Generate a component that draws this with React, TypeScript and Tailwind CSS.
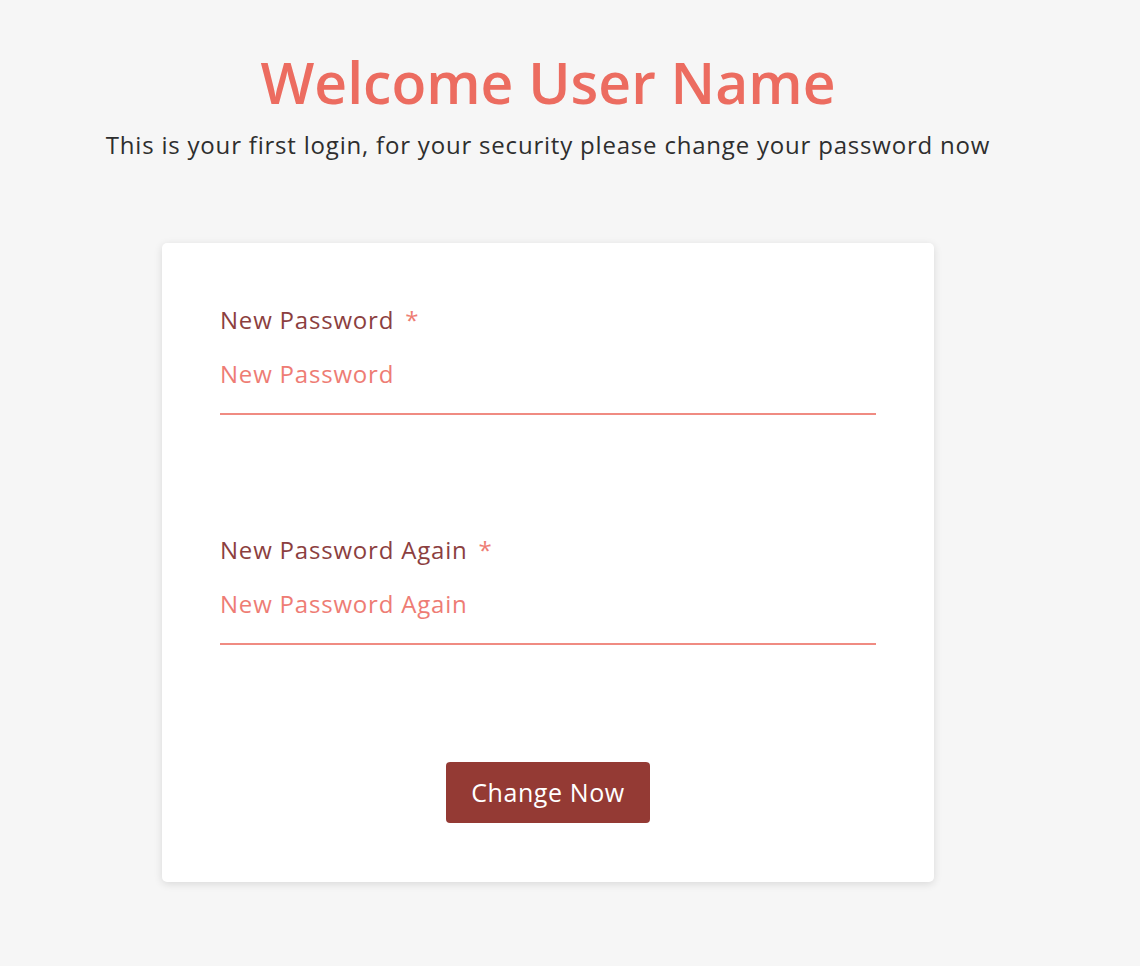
export default function App() {
  return (
    <div className="min-h-[966px] bg-[#f6f6f6] font-['Open_Sans','Noto_Sans',sans-serif]">
      <div className="w-[1096px]">
        <div className="flex flex-col items-center pt-[48px]">
          <h1 className="text-[57px] font-semibold leading-[68px] text-[#ec6c60]">Welcome User Name</h1>
          <p className="mt-[13px] text-[24px] leading-[32px] tracking-[0.8px] text-[#2e2e2e]">
            This is your first login, for your security please change your password now
          </p>
        </div>

        <div className="mx-auto mt-[82px] w-[772px] rounded-[5px] bg-white px-[58px] pb-[59px] pt-[62px] shadow-[0_2px_8px_rgba(0,0,0,0.12)]">
          <Field label="New Password" placeholder="New Password" />
          <div className="h-[120px]" />
          <Field label="New Password Again" placeholder="New Password Again" />

          <div className="mt-[117px] flex justify-center">
            <button className="h-[61px] w-[204px] rounded-[4px] bg-[#943a34] text-[25px] tracking-[0.6px] text-white">
              Change Now
            </button>
          </div>
        </div>
      </div>
    </div>
  );
}

function Field({ label, placeholder }: { label: string; placeholder: string }) {
  return (
    <div>
      <div className="text-[24px] leading-[30px] tracking-[0.8px] text-[#8c3f3f]">
        {label} <span className="ml-[4px] text-[#ee7d74]">*</span>
      </div>
      <input
        type="password"
        placeholder={placeholder}
        className="mt-[24px] block w-full border-b-2 border-[#f08b82] bg-transparent pb-[24px] text-[24px] leading-[30px] tracking-[0.8px] text-[#ee7c74] outline-none placeholder:text-[#ee7c74]"
      />
    </div>
  );
}
